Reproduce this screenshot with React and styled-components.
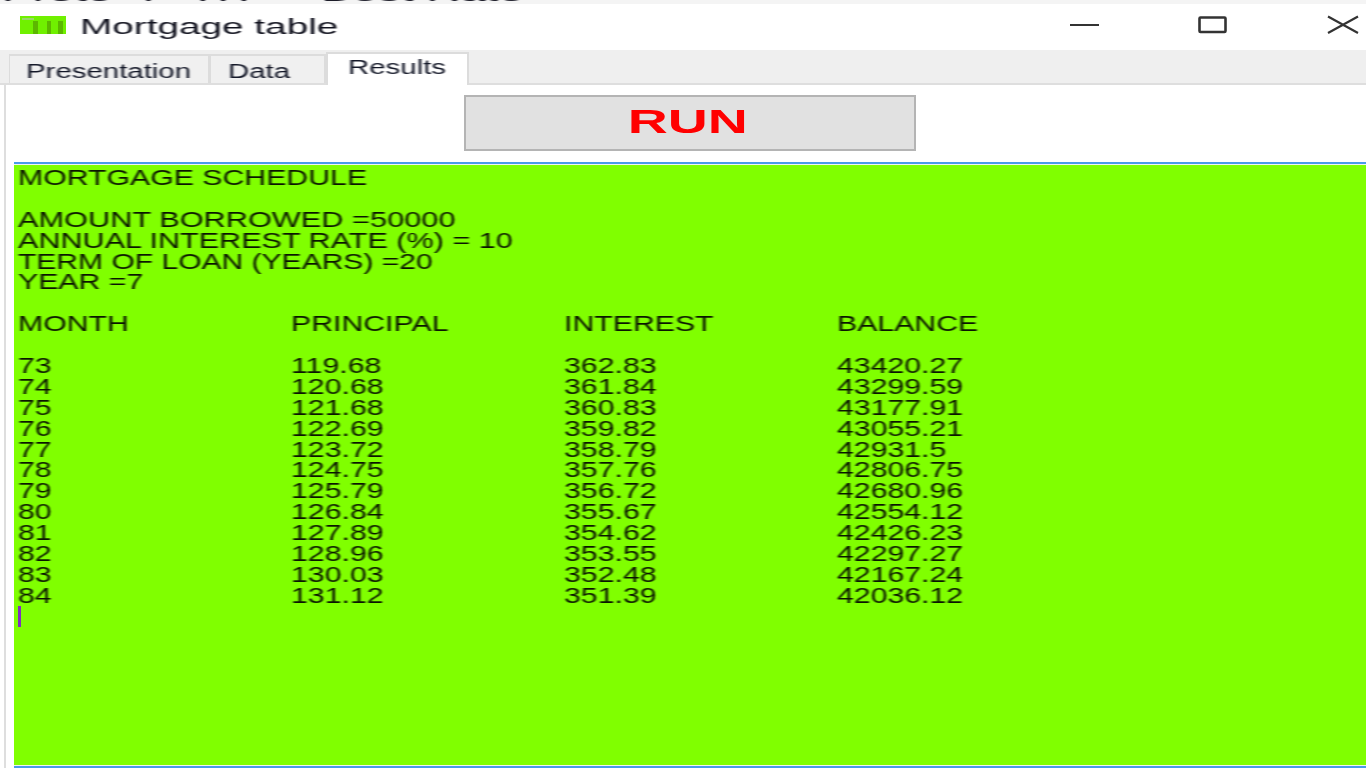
import React from 'react';
import styled, { createGlobalStyle } from 'styled-components';

const Global = createGlobalStyle`
  html, body { margin: 0; padding: 0; background: #fff; overflow: hidden; }
  body { font-family: "Liberation Sans", Arial, sans-serif; }
`;

const Window = styled.div`
  width: 1366px;
  height: 768px;
  display: flex;
  flex-direction: column;
  background: #fff;
  overflow: hidden;
`;

const ClippedLine = styled.div`
  height: 4px;
  margin-bottom: 1px;
  overflow: hidden;
  background: #f4f4f4;
  padding-left: 2px;
  flex: none;
`;

const ClippedText = styled.span`
  display: block;
  margin-top: -18px;
  font-size: 22px;
  line-height: 24px;
  white-space: pre;
  color: #1c1c28;
  transform: scaleX(2.1);
  transform-origin: left center;
  filter: blur(0.5px);
`;

const TitleBar = styled.div`
  height: 45px;
  flex: none;
  display: flex;
  align-items: center;
  padding: 0 7px 6px 20px;
  box-sizing: border-box;
  background: #fff;
`;

const AppIcon = styled.svg`
  width: 46px;
  height: 18px;
  flex: none;
  margin-right: 14px;
  filter: blur(0.5px);
`;

const Stretch = styled.span`
  display: inline-block;
  white-space: pre;
  transform: scaleX(${p => p.$x || 1.375});
  transform-origin: left center;
  filter: blur(0.6px);
`;

const WindowTitle = styled.div`
  font-size: 22px;
  line-height: 26px;
  margin-top: 4px;
  color: #12131f;
  flex: 1;
`;

const Controls = styled.div`
  display: flex;
  align-items: center;
  gap: 97px;
`;

const ControlIcon = styled.svg`
  width: 32px;
  height: 22px;
  flex: none;
  filter: blur(0.4px);
`;

const TabStrip = styled.div`
  height: 35px;
  flex: none;
  display: flex;
  align-items: flex-end;
  background: #efefef;
  border-bottom: 2px solid #dedede;
  padding-left: 9px;
  box-sizing: border-box;
`;

const Tab = styled.div`
  box-sizing: border-box;
  width: ${p => p.$w}px;
  height: ${p => (p.$active ? 33 : 29)}px;
  padding-left: ${p => p.$pad}px;
  margin-bottom: ${p => (p.$active ? -2 : 0)}px;
  background: ${p => (p.$active ? '#fff' : '#f0f0f0')};
  border: 2px solid #dcdcdc;
  border-bottom: none;
  border-left-width: ${p => (p.$active ? 2 : 1)}px;
  font-size: 20px;
  line-height: ${p => (p.$active ? 26 : 30)}px;
  color: #141828;
`;

const Page = styled.div`
  flex: 1;
  min-height: 0;
  display: flex;
  flex-direction: column;
  border-left: 2px solid #dedede;
  margin-left: 4px;
  padding-left: 8px;
  box-sizing: border-box;
`;

const ButtonRow = styled.div`
  height: 77px;
  flex: none;
  padding: 10px 0 0 450px;
  box-sizing: border-box;
`;

const RunButton = styled.button`
  width: 452px;
  height: 56px;
  box-sizing: border-box;
  background: #e1e1e1;
  border: 2px solid #b4b4b4;
  font-family: inherit;
  font-weight: 700;
  color: #ff0000;
  padding: 0 4px 0 0;
  display: flex;
  align-items: center;
  justify-content: center;
  filter: blur(0.4px);
`;

const RunLabel = styled.span`
  display: inline-block;
  transform: scaleX(1.68);
  font-size: 33px;
  line-height: 36px;
  margin-top: -2px;
`;

const Output = styled.div`
  flex: 1;
  min-height: 0;
  background: #80ff00;
  border-top: 2px solid #4a9be8;
  border-bottom: 2px solid #4a9be8;
  box-shadow: inset 0 1px 0 #f2f2f2, inset 0 -1px 0 #f2f2f2;
  padding: 4px 0 0 4px;
  box-sizing: border-box;
  font-size: 22px;
  line-height: 20.9px;
  color: #0a1500;
`;

const Line = styled.div`
  height: 20.9px;
  white-space: pre;
`;

const Row = styled.div`
  height: 20.9px;
  display: grid;
  grid-template-columns: repeat(4, 273px);
`;

const Caret = styled.div`
  width: 3px;
  height: 21px;
  margin-top: -1px;
  background: #8030c0;
`;

const rows = [
  ['73', '119.68', '362.83', '43420.27'],
  ['74', '120.68', '361.84', '43299.59'],
  ['75', '121.68', '360.83', '43177.91'],
  ['76', '122.69', '359.82', '43055.21'],
  ['77', '123.72', '358.79', '42931.5'],
  ['78', '124.75', '357.76', '42806.75'],
  ['79', '125.79', '356.72', '42680.96'],
  ['80', '126.84', '355.67', '42554.12'],
  ['81', '127.89', '354.62', '42426.23'],
  ['82', '128.96', '353.55', '42297.27'],
  ['83', '130.03', '352.48', '42167.24'],
  ['84', '131.12', '351.39', '42036.12'],
];

const TextLine = ({ children, x }) => (
  <Line>
    <Stretch $x={x}>{children}</Stretch>
  </Line>
);

const DataRow = ({ cells }) => (
  <Row>
    {cells.map((c, i) => (
      <Stretch key={i}>{c}</Stretch>
    ))}
  </Row>
);

export default function App() {
  return (
    <Window>
      <Global />
      <ClippedLine>
        <ClippedText>Prete  7  TIT     Best Rate</ClippedText>
      </ClippedLine>
      <TitleBar>
        <AppIcon viewBox="0 0 46 18">
          <rect width="46" height="18" fill="#70f000" />
          <rect x="2" y="2" width="12" height="2" fill="#9ad66a" />
          <rect x="13" y="5" width="5" height="13" fill="#5cb800" />
          <rect x="27" y="5" width="4" height="13" fill="#5cb800" />
          <rect x="38" y="5" width="5" height="13" fill="#5cb800" />
        </AppIcon>
        <WindowTitle>
          <Stretch $x={1.76}>Mortgage table</Stretch>
        </WindowTitle>
        <Controls>
          <ControlIcon viewBox="0 0 32 22">
            <path d="M1 11H30" stroke="#333" strokeWidth="2" fill="none" />
          </ControlIcon>
          <ControlIcon viewBox="0 0 32 22">
            <rect x="1.5" y="3.5" width="26" height="14.5" stroke="#333" strokeWidth="2.6" fill="none" rx="1" />
          </ControlIcon>
          <ControlIcon viewBox="0 0 32 22">
            <path d="M1 2.5L31 19M31 2.5L1 19" stroke="#333" strokeWidth="2.2" fill="none" />
          </ControlIcon>
        </Controls>
      </TitleBar>
      <TabStrip>
        <Tab $w={201} $pad={16}>
          <Stretch $x={1.47}>Presentation</Stretch>
        </Tab>
        <Tab $w={116} $pad={17}>
          <Stretch $x={1.47}>Data</Stretch>
        </Tab>
        <Tab $w={143} $pad={20} $active>
          <Stretch $x={1.47}>Results</Stretch>
        </Tab>
      </TabStrip>
      <Page>
        <ButtonRow>
          <RunButton>
            <RunLabel>RUN</RunLabel>
          </RunButton>
        </ButtonRow>
        <Output>
          <TextLine>MORTGAGE SCHEDULE</TextLine>
          <Line />
          <TextLine x={1.397}>AMOUNT BORROWED =50000</TextLine>
          <TextLine x={1.39}>ANNUAL INTEREST RATE (%) = 10</TextLine>
          <TextLine x={1.365}>TERM OF LOAN (YEARS) =20</TextLine>
          <TextLine>YEAR =7</TextLine>
          <Line />
          <DataRow cells={['MONTH', 'PRINCIPAL', 'INTEREST', 'BALANCE']} />
          <Line />
          {rows.map(r => (
            <DataRow key={r[0]} cells={r} />
          ))}
          <Caret />
        </Output>
      </Page>
    </Window>
  );
}
